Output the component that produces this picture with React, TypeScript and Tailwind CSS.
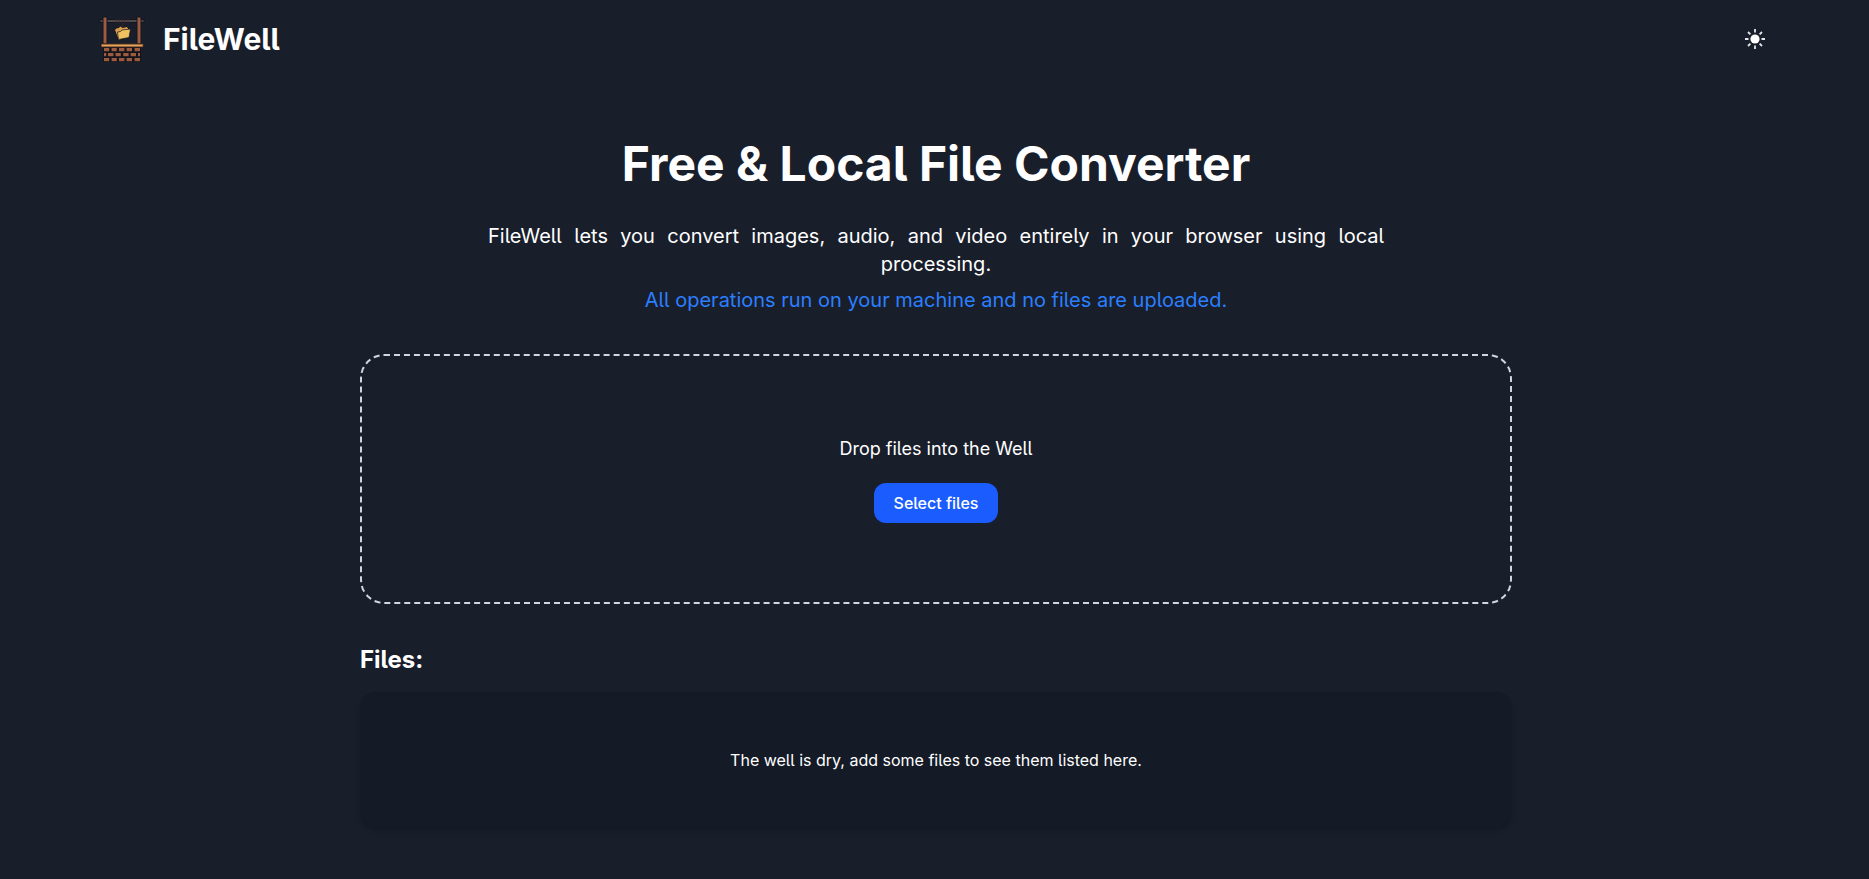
import { FC } from "react";

const BRICK_ROWS = [
  { y: 48, bricks: [[13, 5.2], [20.6, 5.2], [28, 5.4], [35.6, 5.4], [43.6, 5.4]] },
  { y: 53, bricks: [[13, 2.2], [17, 5.4], [24.6, 5.2], [32.2, 5.4], [39.6, 5.4], [47, 2]] },
  { y: 58, bricks: [[13, 5.2], [20.6, 5.2], [28, 5.4], [35.6, 5.4], [43.6, 5.4]] },
];

const WellLogo: FC = () => (
  <svg viewBox="8 15 48 48" className="h-12 w-12">
    {/* crossbar and rope */}
    <path d="M8.5 21h45" stroke="#14141c" strokeWidth="4" />
    <path d="M9.5 21h43" stroke="#655d66" strokeWidth="1.3" />
    <path d="M25 19v4M28 19v4M31 19v4M34 19v4M37 19v4M32 23v5" stroke="#3d2a2b" />
    {/* posts */}
    <path d="M12 17h4v27h-4zM46 17h4v27h-4z" fill="#9a5b40" stroke="#14141c" />
    {/* folder */}
    <path
      d="m23.5 30 1.5-2 3-.5 1.5-1.5 2 1.5 4.5-1 1.5 2-2 9-8 3z"
      fill="#d99d49"
      stroke="#14141c"
    />
    <path d="m26.5 32 3-.5 1.5-1.5 8.500-1-1.500 8.500-10.500 2z" fill="#efc160" stroke="#14141c" strokeWidth=".7" />
    {/* wall */}
    <path d="M12 46h38v16H12z" fill="#14141c" />
    {BRICK_ROWS.map((row) =>
      row.bricks.map(([x, w]) => (
        <rect key={`${row.y}-${x}`} x={x} y={row.y} width={w} height="3.2" fill="#9a5b40" />
      ))
    )}
    <path d="M9.800 43.500h42.700v4H9.800z" fill="#14141c" />
    <path d="M10.500 44.200h41.400v2.500H10.500z" fill="#e0a65a" stroke="#8a4f32" strokeWidth=".7" />
  </svg>
);

const SunIcon: FC = () => (
  <svg viewBox="0 0 20 20" className="h-5 w-5">
    <circle cx="10" cy="10" r="4.6" fill="#fff" />
    <path
      d="M10 0v3.5M10 16.5v3.5M0 10h3.5M16.5 10h3.5M3 3l2.4 2.4M14.6 14.6l2.4 2.4M3 17l2.4-2.4M14.6 5.4l2.4-2.4"
      stroke="#e5e7eb"
      strokeWidth="1.8"
    />
  </svg>
);

const Header: FC = () => (
  <header className="flex h-[78px] items-center justify-between pr-[97px] pl-[99px]">
    <div className="flex items-center gap-4">
      <WellLogo />
      <span className="text-3xl font-bold">FileWell</span>
    </div>
    <button className="flex h-10 w-10 items-center justify-center">
      <SunIcon />
    </button>
  </header>
);

const App: FC = () => {
  return (
    <div className="h-screen overflow-hidden bg-[#191e2b] font-[Inter,sans-serif] text-white [font-feature-settings:'cv05']">
      <div className="w-[1872px]">
        <Header />
        <main className="mx-auto flex max-w-6xl flex-col pt-[62px]">
          <h1 className="text-center text-5xl font-bold">
            Free &amp; Local File Converter
          </h1>
          <div className="mx-auto mt-[34px] w-full max-w-4xl text-xl">
            <p>
              <span className="block text-justify [text-align-last:justify]">
                FileWell lets you convert images, audio, and video entirely in
                your browser using local
              </span>
              <span className="block text-center">processing.</span>
            </p>
            <p className="mt-2 text-center text-[#2b7fff]">
              All operations run on your machine and no files are uploaded.
            </p>
          </div>
          <section className="mt-10 flex h-[250px] flex-col items-center justify-center gap-5 rounded-3xl border-2 border-dashed border-gray-300">
            <p className="text-lg">Drop files into the Well</p>
            <button className="h-10 rounded-xl bg-[#1b5cff] px-5 font-medium">
              Select files
            </button>
          </section>
          <h2 className="mt-10 text-2xl font-bold">Files:</h2>
          <section className="mt-4 rounded-2xl bg-[#141a26] p-14 text-center shadow-md">
            <p>The well is dry, add some files to see them listed here.</p>
          </section>
        </main>
      </div>
    </div>
  );
};

export default App;
